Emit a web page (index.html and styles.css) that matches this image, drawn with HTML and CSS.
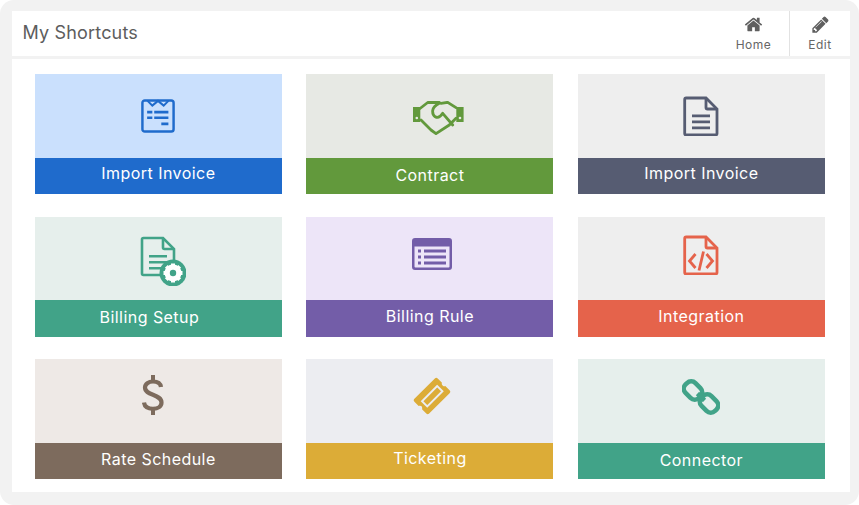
FILE: index.html
```html
<!DOCTYPE html>
<html lang="en">
<head>
<meta charset="utf-8">
<title>My Shortcuts</title>
<link rel="stylesheet" href="styles.css">
</head>
<body>
<main class="frame">
  <header class="topbar">
    <h1 class="title">My Shortcuts</h1>
    <nav class="actions">
      <a class="action action-home">
        <svg class="action-icon" viewBox="0 0 1792 1792"><path d="M1472 992v480q0 26-19 45t-45 19h-384v-384H768v384H384q-26 0-45-19t-19-45V992q0-1 .5-3t.5-3l575-474 575 474q1 2 1 6zm223-69l-62 74q-8 9-21 11h-3q-13 0-21-7L896 424l-692 577q-12 8-24 7-13-2-21-11l-62-74q-8-10-7-23.5t11-21.5l719-599q32-26 76-26t76 26l244 204V288q0-14 9-23t23-9h192q14 0 23 9t9 23v408l219 182q10 8 11 21.5t-7 23.5z"/></svg>
        <span>Home</span>
      </a>
      <a class="action action-edit">
        <svg class="action-icon" viewBox="0 0 1792 1792"><path d="M491 1536l91-91-235-235-91 91v107h128v128h107zm523-928q0-22-22-22-10 0-17 7l-542 542q-7 7-7 17 0 22 22 22 10 0 17-7l542-542q7-7 7-17zm-54-192l416 416-832 832H128v-416zm683 96q0 53-37 90l-166 166-416-416 166-165q36-38 90-38 53 0 91 38l235 234q37 39 37 91z"/></svg>
        <span>Edit</span>
      </a>
    </nav>
  </header>
  <section class="grid">
    <a class="card blue">
      <div class="tile"><svg class="icon icon-invoice" viewBox="0 0 36 36"><rect x="1.500" y="1.500" width="33" height="33" rx="2.500" fill="none" stroke="currentColor" stroke-width="2.600"/><path d="M7 2l5 5 6-5 6 5 5-5" fill="none" stroke="currentColor" stroke-width="2.200"/><path d="M6.500 12.500h5.500v2.800H6.500zM14 12.500h15v2.800H14zM6.500 18.500h5.500v2.800H6.500zM14 18.500h15v2.800H14zM21.500 25h7.500v2.800h-7.500z" fill="currentColor"/></svg></div>
      <div class="bar up2">Import Invoice</div>
    </a>
    <a class="card green">
      <div class="tile"><svg class="icon icon-wide" viewBox="0 0 51 34"><path d="M0 6h7.300v15H0zM43.300 6h7.300v15h-7.300z" fill="currentColor"/><circle cx="3.800" cy="17" r="1.300" fill="#e7e9e4"/><circle cx="47" cy="17" r="1.300" fill="#e7e9e4"/><path d="M7 7.500l7.700-6h11.600M26.300 2.300C23 4 20 7 19.700 9.500c-.3 3 .5 5 2.500 6.300 2.500 1.400 5 .5 7.500-3.500L39.700 24M28 2.300l6.700-1L43 6.700M43 17.300L36.300 24 23 32.700 18 29 8 19" fill="none" stroke="currentColor" stroke-width="2.800" stroke-linecap="round" stroke-linejoin="round"/></svg></div>
      <div class="bar up0">Contract</div>
    </a>
    <a class="card slate">
      <div class="tile"><svg class="icon icon-doc" viewBox="0 0 36 40"><path d="M1.700 3.500A1.500 1.500 0 0 1 3.200 2H23l11 11v24.500a1.500 1.500 0 0 1-1.500 1.500H3.200a1.500 1.500 0 0 1-1.500-1.500z" fill="none" stroke="currentColor" stroke-width="2.800"/><path d="M23 2v9.500a1.500 1.500 0 0 0 1.500 1.500H34" fill="none" stroke="currentColor" stroke-width="2.800"/><path d="M9 18.500h18v2.800H9zM9 24.500h18v2.800H9zM9 30.500h18v2.800H9z" fill="currentColor"/></svg></div>
      <div class="bar up2">Import Invoice</div>
    </a>
    <a class="card teal">
      <div class="tile"><svg class="icon icon-gear" viewBox="0 0 46 50"><path d="M25 39H3.500A1.500 1.500 0 0 1 2 37.500V3.500A1.500 1.500 0 0 1 3.500 2H23l11 11v12" fill="none" stroke="currentColor" stroke-width="2.600"/><path d="M23 2v9.500a1.500 1.500 0 0 0 1.500 1.500H34" fill="none" stroke="currentColor" stroke-width="2.600"/><path d="M9 19h18v2.600H9zM9 25h18v2.600H9zM9 31h13v2.600H9z" fill="currentColor"/><circle cx="33" cy="37" r="13.500" fill="currentColor"/><circle cx="33" cy="37" r="6" fill="none" stroke="#fff" stroke-width="5"/><path d="M33 27.500v19M23.500 37h19M26.300 30.300l13.400 13.400M39.700 30.300L26.300 43.700" stroke="#fff" stroke-width="4"/><circle cx="33" cy="37" r="3.200" fill="currentColor"/></svg></div>
      <div class="bar up0 bar-shift">Billing Setup</div>
    </a>
    <a class="card purple">
      <div class="tile"><svg class="icon icon-list" viewBox="0 0 40 32"><path fill-rule="evenodd" d="M3 0h34a3 3 0 0 1 3 3v26a3 3 0 0 1-3 3H3a3 3 0 0 1-3-3V3a3 3 0 0 1 3-3zM2.500 8.500v20a1 1 0 0 0 1 1h33a1 1 0 0 0 1-1v-20z" fill="currentColor"/><path d="M6 11.500h3v3H6zM12 11.500h22v3H12zM6 17.500h3v3H6zM12 17.500h22v3H12zM6 23.500h3v3H6zM12 23.500h22v3H12z" fill="currentColor"/></svg></div>
      <div class="bar up1">Billing Rule</div>
    </a>
    <a class="card red">
      <div class="tile"><svg class="icon icon-code" viewBox="0 0 36 40"><path d="M1.700 3.500A1.500 1.500 0 0 1 3.200 2H23l11 11v24.500a1.500 1.500 0 0 1-1.500 1.500H3.200a1.500 1.500 0 0 1-1.500-1.500z" fill="none" stroke="currentColor" stroke-width="2.800"/><path d="M23 2v9.500a1.500 1.500 0 0 0 1.500 1.500H34" fill="none" stroke="currentColor" stroke-width="2.800"/><path d="M12.500 19l-6 7 6 7M23.500 19l6 7-6 7M20.500 16.500l-4.500 19" fill="none" stroke="currentColor" stroke-width="2.800"/></svg></div>
      <div class="bar up1">Integration</div>
    </a>
    <a class="card brown">
      <div class="tile"><svg class="icon icon-dollar" viewBox="0 0 22 40"><path d="M19 12C18.500 8.500 15.500 6.500 11 6.500S3 9 3 12.500c0 4 3.500 5.500 8 7.300s8.500 3.500 8.500 7.700c0 4-3.500 6.300-8.500 6.300S2.500 31.500 2 27.500" fill="none" stroke="currentColor" stroke-width="4.200"/><path d="M9 0h4v7H9zM9 33h4v7H9z" fill="currentColor"/></svg></div>
      <div class="bar up1">Rate Schedule</div>
    </a>
    <a class="card yellow">
      <div class="tile"><svg class="icon icon-ticket" viewBox="0 0 40 40"><path d="M26 1.500l4.500 4.500c-1 2 1.500 4.500 3.500 3.500l4.500 4.500c1 1 1 2 0 3L17 38.500c-1 1-2 1-3 0l-4.500-4.500c1-2.500-1-4.500-3.500-3.500L1.500 26c-1-1-1-2 0-3L23 1.500c1-1 2-1 3 0z" fill="currentColor"/><path d="M25.500 9.500L9.500 25.500l5.500 5.500 16-16z" fill="none" stroke="#ecedf1" stroke-width="2"/></svg></div>
      <div class="bar up2">Ticketing</div>
    </a>
    <a class="card teal">
      <div class="tile"><svg class="icon icon-link" viewBox="0 0 38 38"><g fill="none" stroke="currentColor" stroke-width="4.600"><rect x="4" y="3" width="14" height="19" rx="6" transform="rotate(-45 11 12.500)"/><rect x="20" y="16" width="14" height="19" rx="6" transform="rotate(-45 27 25.500)"/></g><path d="M15.500 15.500l7 7" stroke="currentColor" stroke-width="4.600"/></svg></div>
      <div class="bar up0">Connector</div>
    </a>
  </section>
</main>
</body>
</html>
```
FILE: styles.css
```css
* { box-sizing: border-box; }
html, body { margin: 0; height: 100%; background: #fff; }
body { font-family: "Inter", "Open Sans", sans-serif; overflow: hidden; }
.frame {
  width: 859px;
  height: 505px;
  background: #f2f2f2;
  border-radius: 14px;
  padding: 11px 9px 13px 12px;
  display: flex;
  flex-direction: column;
  gap: 3px;
}
.topbar {
  height: 45px;
  background: #fff;
  display: flex;
  justify-content: space-between;
  align-items: stretch;
  flex: none;
}
.title {
  margin: 0;
  padding: 10px 0 0 10.500px;
  font-size: 18px;
  font-weight: 400;
  line-height: 24px;
  letter-spacing: 0.170px;
  color: #5d5d5d;
}
.actions { display: flex; }
.action {
  display: flex;
  flex-direction: column;
  align-items: center;
  padding-top: 4px;
  font-size: 12px;
  line-height: 14px;
  letter-spacing: 0.500px;
  color: #666;
}
.action-home { width: 72px; border-right: 1px solid #e2e2e2; }
.action-edit { width: 60px; }
.action-icon { width: 19px; height: 19px; fill: #5f5f5f; margin-bottom: 4px; }
.grid {
  flex: 1;
  background: #fff;
  padding: 15px 25px 13px 22.900px;
  display: grid;
  grid-template-columns: repeat(3, 247px);
  grid-template-rows: repeat(3, 120px);
  column-gap: 24.500px;
  row-gap: 22.500px;
}
.card { display: flex; flex-direction: column; height: 120px; }
.tile {
  height: 83.600px;
  flex: none;
  display: flex;
  align-items: center;
  justify-content: center;
}
.bar {
  flex: 1;
  text-align: center;
  color: #fff;
  font-size: 16px;
  line-height: 22px;
  letter-spacing: 0.450px;
}
.up0 { padding-top: 6px; }
.up1 { padding-top: 5px; }
.up2 { padding-top: 4px; }
.bar-shift { padding-right: 18px; }
.icon { display: block; flex: none; }
.icon-invoice { width: 34px; height: 34px; margin-right: 1px; }
.icon-doc { width: 36px; height: 40px; }
.icon-code { width: 36px; height: 40px; margin-bottom: 7px; }
.icon-wide { width: 51px; height: 34px; margin: 5px 0 0 17px; }
.icon-gear { width: 46px; height: 50px; margin: 6px 0 0 9px; }
.icon-list { width: 40px; height: 32px; margin: 0 0 8px 5px; }
.icon-dollar { width: 22px; height: 40px; margin: 0 11px 12px 0; }
.icon-ticket { width: 38px; height: 38px; margin: 0 0 10px 4px; }
.icon-link { width: 38px; height: 38px; margin: 0 0 8px 0; }
.blue .tile { background: #cae0fd; color: #1f6bcc; }
.blue .bar { background: #1f6bcc; }
.green .tile { background: #e7e9e4; color: #62993c; }
.green .bar { background: #62993c; }
.slate .tile { background: #eeeeee; color: #565c72; }
.slate .bar { background: #565c72; }
.teal .tile { background: #e6efec; color: #41a388; }
.teal .bar { background: #41a388; }
.purple .tile { background: #ede5f8; color: #735da8; }
.purple .bar { background: #735da8; }
.red .tile { background: #eeeeee; color: #e5634b; }
.red .bar { background: #e5634b; }
.brown .tile { background: #eee9e6; color: #7d6b5d; }
.brown .bar { background: #7d6b5d; }
.yellow .tile { background: #ecedf1; color: #dcac37; }
.yellow .bar { background: #dcac37; }
```
